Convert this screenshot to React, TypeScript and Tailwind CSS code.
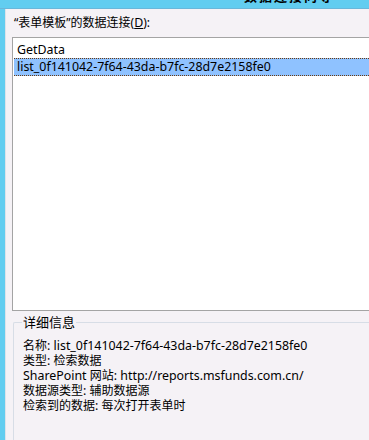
const font = { fontFamily: '"Noto Sans", "Noto Sans CJK SC", sans-serif' };

const details = [
  ["名称", "list_0f141042-7f64-43da-b7fc-28d7e2158fe0"],
  ["类型", "检索数据"],
  ["SharePoint 网站", "http://reports.msfunds.com.cn/"],
  ["数据源类型", "辅助数据源"],
  ["检索到的数据", "每次打开表单时"],
];

// Latin runs get their own size so widths line up with the dialog font
function Txt({ s }: { s: string }) {
  const parts = s.match(/[\x00-\x7f]+|[^\x00-\x7f]+/g) ?? [];
  return (
    <>
      {parts.map((p, i) =>
        /^[\x00-\x7f]/.test(p) ? (
          <span key={i} className="inline-block whitespace-pre leading-[15px] text-[12.4px]">{p}</span>
        ) : (
          <span key={i} className="inline-block whitespace-pre leading-[15px]">{p}</span>
        )
      )}
    </>
  );
}

export default function App() {
  return (
    <div className="w-[369px] h-[440px] overflow-hidden bg-[#62cdf0] flex flex-col text-[12px] text-black" style={font}>
      <div className="h-[9px] relative overflow-hidden border-b border-[#6ab7da] shrink-0">
        <span className="absolute left-[244px] top-[-13px] font-bold text-[13px] tracking-[2px]">数据连接向导</span>
      </div>
      <div className="flex-1 flex ml-[5px] border-l border-[#dde3ea] bg-[#f5f2f6] flex-col pl-[6px]">
        <div className="mt-[6px] h-[16px] leading-[16px] ml-[2px]">
          “表单模板”的数据连接(<span className="underline text-[12.4px]">D</span>):
        </div>
        <div className="mt-[6px] h-[274px] bg-white border-t border-l border-b border-[#a4a4a4] pt-[4px] pl-[1px]">
          <div className="h-[16px] leading-[16px] pl-[3px]"><Txt s="GetData" /></div>
          <div className="h-[18px] leading-[16px] pl-[3px] bg-[#8fc2ff] border-y border-dotted border-[#6b3b10]">
            <Txt s="list_0f141042-7f64-43da-b7fc-28d7e2158fe0" />
          </div>
        </div>
        <div className="relative mt-[11px] flex-1 border-t border-l border-[#d7dde6] ml-[1px] rounded-tl-[2px]">
          <span className="absolute left-[8px] top-[-9px] bg-[#f5f2f6] px-[1px] leading-[16px] text-[13px]">详细信息</span>
          <div className="pt-[15px] pl-[9px] flex flex-col">
            {details.map(([k, v]) => (
              <div key={k} className="h-[15px] leading-[15px] whitespace-nowrap">
                <Txt s={`${k}: ${v}`} />
              </div>
            ))}
          </div>
        </div>
      </div>
    </div>
  );
}
